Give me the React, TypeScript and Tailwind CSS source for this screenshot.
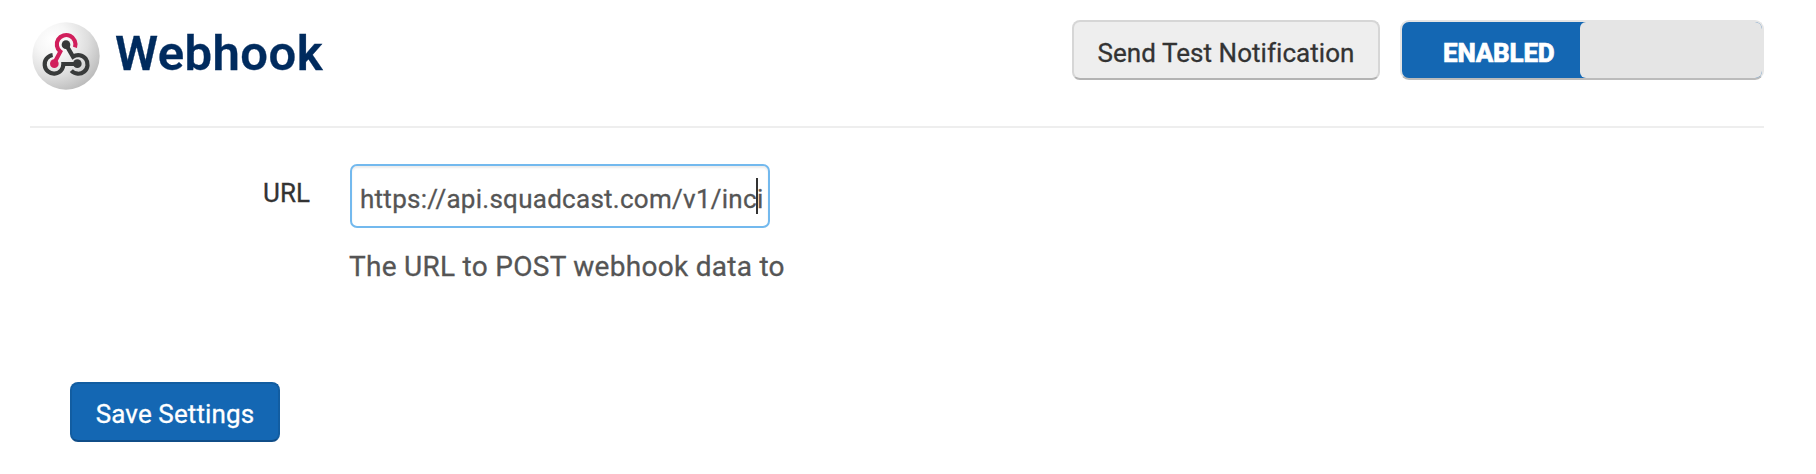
function WebhookLogo() {
  return (
    <svg className="h-[90px] w-[90px] shrink-0" viewBox="0 0 270 270" fill="none" aria-hidden="true">
      <defs>
        <radialGradient id="sphere" cx="0.3" cy="0.26" r="0.82">
          <stop offset="0" stopColor="#ffffff" />
          <stop offset="0.3" stopColor="#f6f6f6" />
          <stop offset="0.65" stopColor="#dedede" />
          <stop offset="1" stopColor="#bababa" />
        </radialGradient>
      </defs>
      <circle cx="138" cy="138" r="101" fill="url(#sphere)" />
      <g strokeWidth="12.5">
        <path d="M165 112A28 28 0 1 0 121 125L104 157" stroke="#d11f5c" />
        <path d="M138 104L159 140A28 28 0 1 1 154 182" stroke="#383a3a" />
        <path d="M98 135A28 28 0 1 0 130 162H172" stroke="#383a3a" />
      </g>
      <circle cx="103" cy="161" r="13" fill="#d11f5c" />
      <circle cx="138" cy="104" r="13" fill="#383a3a" />
      <circle cx="172" cy="161" r="13" fill="#383a3a" />
    </svg>
  );
}

export default function App() {
  return (
    <main className="h-[474px] w-[1816px] overflow-hidden bg-white font-['Roboto',sans-serif] text-[26px] leading-[30px] text-[#333] [-webkit-text-stroke:0.3px]">
      <header className="mr-[52px] ml-[30px] flex h-[128px] items-start border-b-2 border-[#eee]">
        <div className="-ml-[10px] pt-[10px]">
          <WebhookLogo />
        </div>
        <h1 className="ml-[5px] pt-[26px] text-[49px] leading-[56px] font-semibold tracking-[0.45px] whitespace-nowrap text-[#002b5e]">Webhook</h1>
        <div className="ml-auto flex gap-[20px] pt-[20px]">
          <button className="h-[60px] w-[308px] rounded-[8px] border-2 border-[#d6d6d6] border-b-[#b3b3b3] bg-[#eee] pt-[5px] tracking-[0.05px] whitespace-nowrap">
            Send Test Notification
          </button>
          <button className="flex h-[60px] w-[364px] overflow-hidden rounded-[9px] border-2 border-[#e5e5e5] border-b-[#bbb] bg-[#1467b3]" role="switch" aria-checked="true">
            <span className="h-[56px] w-[178px] shrink-0 pt-[16px] pl-[41px] text-left font-extrabold tracking-[-0.2px] text-white [-webkit-text-stroke:0.6px]">ENABLED</span>
            <span className="h-[56px] flex-1 rounded-l-[6px] bg-[#e5e5e5]" />
          </button>
        </div>
      </header>
      <section className="flex pt-[36px]">
        <label className="w-[310px] pt-[14px] text-right">URL</label>
        <div className="ml-[40px]">
          <div className="relative flex h-[64px] w-[420px] items-center rounded-[7px] border-2 border-[#73b9ee] bg-white px-[8px] pt-[5px] text-[#555] shadow-[inset_0_2px_2px_rgba(0,0,0,0.075)]">
            <span className="tracking-[0.27px] whitespace-nowrap">https://api.squadcast.com/v1/inci</span>
            <span className="absolute top-[12px] left-[404px] h-[36px] w-[2px] bg-[#333]" />
          </div>
          <p className="mt-[22px] -ml-px text-[28px] leading-[34px] tracking-[0.28px] whitespace-nowrap text-[#555]">The URL to POST webhook data to</p>
        </div>
      </section>
      <button className="mt-[98px] ml-[70px] h-[60px] w-[210px] rounded-[8px] border-2 border-[#125da1] border-b-[#104d88] bg-[#1467b3] pt-[4px] tracking-[0.12px] whitespace-nowrap text-white">
        Save Settings
      </button>
    </main>
  );
}
